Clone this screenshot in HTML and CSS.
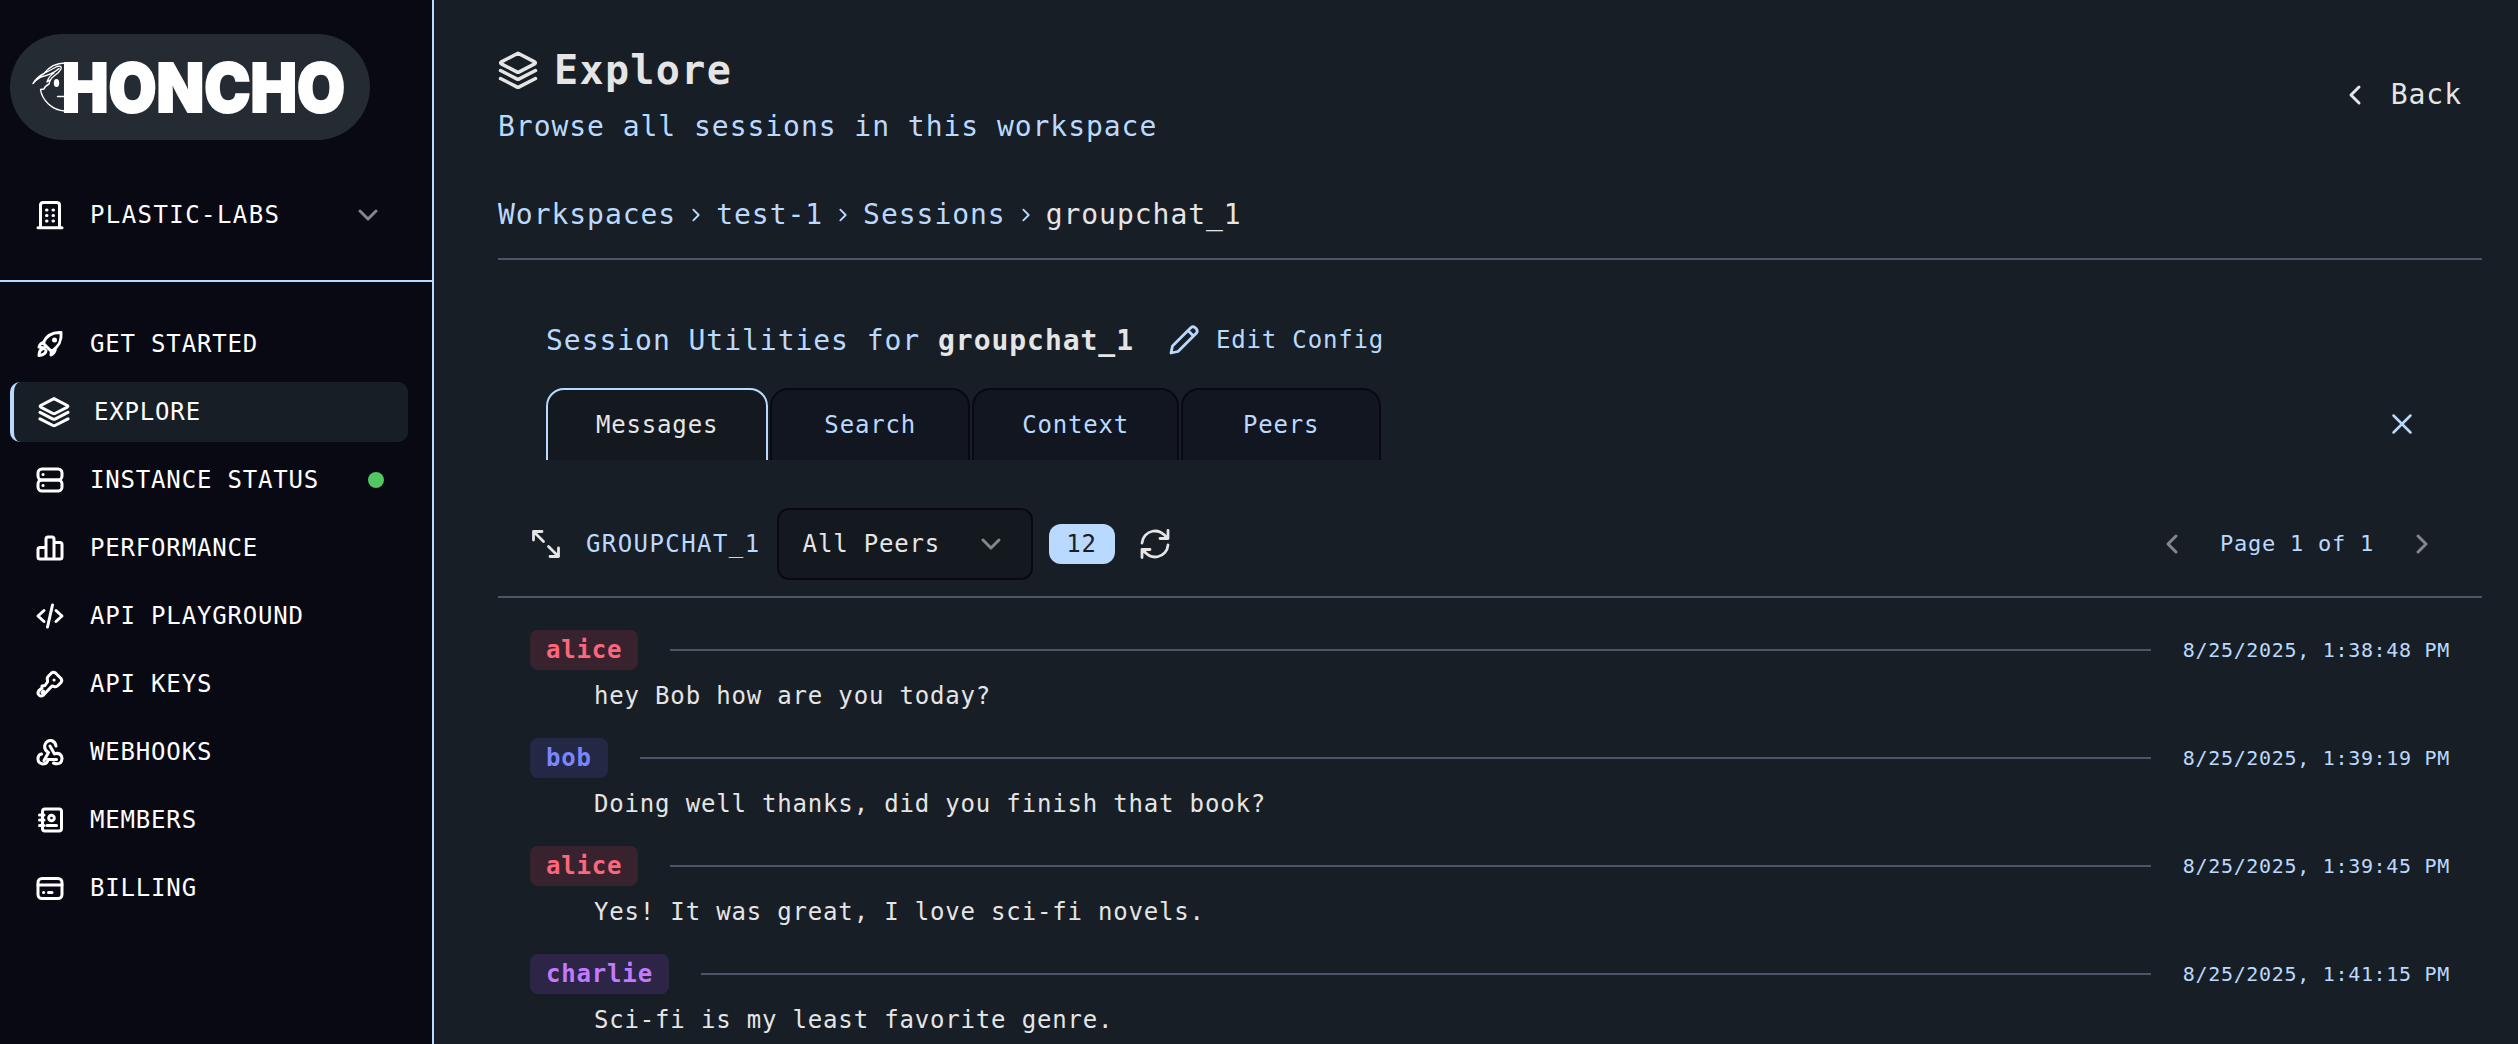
FILE: index.html
```html
<!DOCTYPE html>
<html lang="en">
<head>
<meta charset="utf-8">
<title>Honcho – Explore</title>
<link rel="stylesheet" href="styles.css">
</head>
<body>
<svg class="defs" aria-hidden="true">
  <symbol id="layers" viewBox="0 0 32 32"><path d="M16 2.600 29.300 9.500Q30.500 10.300 29.300 11.100L17 17.500Q16 18 15 17.500L2.700 11.100Q1.500 10.300 2.700 9.500Z M2 16.400 15 23.100Q16 23.600 17 23.100L30 16.400 M2 22.800 15 29.500Q16 30 17 29.500L30 22.800"/></symbol>
  <symbol id="down" viewBox="0 0 24 24"><path d="m4 8 8 8 8-8"/></symbol>
  <symbol id="right" viewBox="0 0 24 24"><path d="m8 4 8 8-8 8"/></symbol>
  <symbol id="left" viewBox="0 0 24 24"><path d="m16 4-8 8 8 8"/></symbol>
</svg>
<div class="app">
  <aside class="sidebar">
    <div class="logo">
      <svg width="316" height="58" viewBox="0 0 316 58">
        <g fill="none" stroke="#fff" stroke-width="1.400" stroke-linecap="round">
          <path d="M33 5C24 5 17 9 12 15.500M1 25.500Q5 19 12 15.500L25 8.500Q30 7 29 11Q27 15 22 18Q18 21 17 26Q13 28 12 31L8.500 31.500C10 42 20 52.500 33 53M1 25.500Q4 22 9 19C15 17.500 22 15 27 10.500M22 15Q17 18 15 24L18 22M25.500 38.500h7"/>
        </g>
        <ellipse cx="24.500" cy="25" rx="2.700" ry="4" fill="#fff" stroke="none"/>
        <text class="wordmark" x="30" y="53.500" textLength="283" lengthAdjust="spacingAndGlyphs">HONCHO</text>
      </svg>
    </div>
    <div class="org">
      <svg class="icon" viewBox="0 0 32 32"><path d="M6.500 28.500V6Q6.500 3.500 9.500 3.500H22.500Q25.500 3.500 25.500 6V28.500M4 28.700H28"/><path class="dots" d="M12.500 11h.5M19 11h.5M12.500 16.500h.5M19 16.500h.5M12.500 22h.5M19 22h.5"/></svg>
      <span>PLASTIC-LABS</span>
      <svg class="caret" viewBox="0 0 24 24"><use href="#down"/></svg>
    </div>
    <nav>
      <a><svg class="icon" viewBox="0 0 32 32"><path d="M9 15C12 8 17 4 27 4.500C28 14 24 19 17.500 23.500L9 15ZM10 14.500Q6 15 5 19L10.500 20M17.500 22.500 17 27Q21 25 21.500 20M10 20.500C6 21 5 24 5 27.500C9 27 12 26 12 22.500"/><circle cx="20.500" cy="12" r="2.500" fill="currentColor" stroke="none"/></svg><span>GET STARTED</span></a>
      <a class="active"><svg class="icon"><use href="#layers"/></svg><span>EXPLORE</span></a>
      <a><svg class="icon" viewBox="0 0 32 32"><rect x="4" y="5" width="24" height="11" rx="4"/><rect x="4" y="16" width="24" height="11" rx="4"/><path class="dots" d="M9 10.500h.1M9 21.500h.1"/></svg><span>INSTANCE STATUS</span><i class="status"></i></a>
      <a><svg class="icon" viewBox="0 0 32 32"><path d="M12 15.500H6Q4 15.500 4 17.500V25Q4 27 6 27H26Q28 27 28 25V12.500Q28 10.500 26 10.500H20M12 27V7Q12 5 14 5H18Q20 5 20 7V27"/></svg><span>PERFORMANCE</span></a>
      <a><svg class="icon" viewBox="0 0 32 32"><path d="M10 10.500 4 16l6 5.500M22 10.500 28 16l-6 5.500M18.500 5 13.500 27"/></svg><span>API PLAYGROUND</span></a>
      <a><svg class="icon" viewBox="0 0 32 32"><path d="M13.500 12Q12.500 10 14.500 8L17.500 5Q19.500 3.500 21.500 5L27 10.500Q28.500 12.500 27 14.500L24 17.500Q22 19.500 20 18.500L18 18 9.500 27Q7 29 5 27Q3 25 5 22.500L8 20V18L11 17.500 13.500 14ZM8 24.500l1.500-1.500"/><path class="dots" d="M20 12h.1"/></svg><span>API KEYS</span></a>
      <a><svg class="icon" viewBox="0 0 32 32"><path d="M10 24.500 14.500 16.500Q9.500 14 11 8.500Q13 4 17.500 4.500Q21.500 6 22 10M16 10 20.500 18Q25 16 27.500 20Q29 24.500 26 27Q23 28.500 19.500 27M22.500 23.500H14Q13.500 28 8.500 28Q3.500 27 4 22Q4.500 18.500 7.500 18"/></svg><span>WEBHOOKS</span></a>
      <a><svg class="icon" viewBox="0 0 32 32"><rect x="8.500" y="5" width="19" height="22" rx="2.500"/><circle cx="17.500" cy="14" r="2.800"/><path d="M13 21.500H22.500M5.500 11H10M5.500 16H10M5.500 21.500H10"/></svg><span>MEMBERS</span></a>
      <a><svg class="icon" viewBox="0 0 32 32"><rect x="4" y="6.500" width="24" height="20" rx="4"/><path d="M4 13H28M9.500 20.500h.2M14.500 20.500h3.500"/></svg><span>BILLING</span></a>
    </nav>
  </aside>
  <main>
    <header class="page-head">
      <div>
        <h1><svg class="h1-icon"><use href="#layers"/></svg>Explore</h1>
        <p class="sub">Browse all sessions in this workspace</p>
      </div>
      <a class="back"><svg class="caret"><use href="#left"/></svg><span>Back</span></a>
    </header>
    <div class="crumbs"><span>Workspaces</span><svg><use href="#right"/></svg><span>test-1</span><svg><use href="#right"/></svg><span>Sessions</span><svg><use href="#right"/></svg><span class="current">groupchat_1</span></div>
    <section class="utilities">
      <div class="util-head">
        <h2>Session Utilities for <b>groupchat_1</b></h2>
        <a class="edit"><svg viewBox="0 0 32 32"><path d="M3 29 4.500 22 23 3.500Q25 2 27 3.500L28.500 5Q30 7 28.500 9L10 27.500 3 29ZM20 6.500 25.500 12"/></svg><span>Edit Config</span></a>
      </div>
      <div class="tab-row">
        <div class="tabs"><a class="tab on">Messages</a><a class="tab">Search</a><a class="tab">Context</a><a class="tab">Peers</a></div>
        <svg class="close" viewBox="0 0 24 24"><path d="M3.500 3.500 20.500 20.500M20.500 3.500 3.500 20.500"/></svg>
      </div>
    </section>
    <div class="toolbar">
      <svg class="tool" viewBox="0 0 32 32"><path d="M3.500 12V3.500H12M3.500 3.500 13.500 13.500M28.500 20V28.500H20M28.500 28.500 18.500 18.500"/></svg>
      <span class="room">GROUPCHAT_1</span>
      <div class="select"><span>All Peers</span><svg class="caret"><use href="#down"/></svg></div>
      <span class="count">12</span>
      <svg class="tool" viewBox="0 0 32 32"><path d="M3 15A13 13 0 0 1 27.500 10M29 2.500V10.500H21M29 17A13 13 0 0 1 4.500 22M3 29.500V21.500H11"/></svg>
      <div class="pager"><svg class="caret"><use href="#left"/></svg><span>Page 1 of 1</span><svg class="caret"><use href="#right"/></svg></div>
    </div>
    <ul class="messages">
      <li><div class="meta"><b class="peer rose">alice</b><hr><time>8/25/2025, 1:38:48 PM</time></div><p>hey Bob how are you today?</p></li>
      <li><div class="meta"><b class="peer indigo">bob</b><hr><time>8/25/2025, 1:39:19 PM</time></div><p>Doing well thanks, did you finish that book?</p></li>
      <li><div class="meta"><b class="peer rose">alice</b><hr><time>8/25/2025, 1:39:45 PM</time></div><p>Yes! It was great, I love sci-fi novels.</p></li>
      <li><div class="meta"><b class="peer purple">charlie</b><hr><time>8/25/2025, 1:41:15 PM</time></div><p>Sci-fi is my least favorite genre.</p></li>
    </ul>
  </main>
</div>
</body>
</html>
```
FILE: styles.css
```css
:root {
  --ink: #090914;
  --panel: #181e26;
  --sky: #bad9ff;
  --text: #e5e5e5;
  --rule: #4a5565;
}
* { box-sizing: border-box; margin: 0; padding: 0; }
html, body { height: 100%; overflow: hidden; }
body {
  background: var(--panel);
  color: var(--text);
  font: 24px/32px "DejaVu Sans Mono", monospace;
  white-space: nowrap;
}
span, p, h1, h2, a, time, b { letter-spacing: .0343em; }
svg { display: block; flex: none; fill: none; stroke: currentColor; stroke-width: 2.800; stroke-linecap: round; stroke-linejoin: round; overflow: visible; }
.defs { display: none; }
.app { display: flex; height: 1044px; }

.sidebar { width: 434px; flex: none; background: var(--ink); border-right: 2px solid var(--sky); color: #fff; }
.logo { width: 360px; height: 106px; margin: 34px 0 0 10px; padding: 24px 22px; border-radius: 53px; background: #252b33; }
.wordmark { font: 900 68px Inter, sans-serif; fill: #fff; stroke: #fff; stroke-width: 2; stroke-linejoin: miter; }
.org { display: flex; align-items: center; height: 142px; padding: 10px 52px 0 34px; border-bottom: 2px solid var(--sky); }
.org span, nav span { margin-left: 24px; }
.org span { letter-spacing: .0593em; }
.icon { width: 32px; height: 32px; stroke-width: 3; }
.dots { stroke-width: 3; }
.caret { width: 24px; height: 24px; color: #85868a; stroke-width: 3; }
.org .caret { margin-left: auto; }
nav { display: flex; flex-direction: column; gap: 8px; padding: 32px 24px 0 10px; }
nav a { display: flex; align-items: center; height: 60px; padding: 0 24px; border-radius: 10px; }
nav .active { background: var(--panel); border-left: 4px solid var(--sky); }
.status { width: 16px; height: 16px; margin-left: auto; border-radius: 50%; background: #50c760; }

main { flex: 1; padding: 0 36px 0 64px; min-width: 0; }
.page-head { display: flex; justify-content: space-between; padding-top: 46px; height: 190px; }
h1 { display: flex; align-items: center; gap: 16px; font-size: 40px; line-height: 48px; }
.h1-icon { width: 40px; height: 40px; }
.sub { margin-top: 15px; font-size: 28px; line-height: 36px; color: var(--sky); }
.back { display: flex; align-items: center; gap: 24px; height: 98px; margin-right: 20px; font-size: 28px; }
.back .caret { color: var(--text); }
.crumbs { display: flex; align-items: center; gap: 12px; height: 70px; padding-bottom: 18px; border-bottom: 2px solid var(--rule); font-size: 28px; color: var(--sky); }
.crumbs svg { width: 16px; height: 16px; }
.current { color: var(--text); }

.utilities { padding: 60px 48px 0; height: 200px; }
.util-head { display: flex; align-items: center; gap: 34px; height: 40px; color: var(--sky); }
h2 { font-size: 28px; font-weight: 400; line-height: 38px; padding-top: 1px; }
h2 b { color: var(--text); }
.edit { display: flex; align-items: center; gap: 16px; }
.edit svg { width: 32px; height: 32px; }
.tab-row { display: flex; align-items: center; justify-content: space-between; margin-top: 28px; padding-right: 20px; }
.tabs { display: flex; gap: 2px; }
.tab { min-width: 200px; height: 72px; padding: 0 48px; line-height: 70px; text-align: center; color: var(--sky); background: #121620; border: 2px solid #090914; border-bottom: 0; border-radius: 18px 18px 0 0; }
.tab.on { color: var(--text); background: #14181f; border-color: var(--sky); }
.close { width: 24px; height: 24px; color: var(--sky); stroke-width: 2.500; }

.toolbar { display: flex; align-items: center; height: 138px; padding: 32px 48px 0 32px; border-bottom: 2px solid var(--rule); }
.tool { width: 32px; height: 32px; }
.room { margin: 0 16px 0 24px; letter-spacing: .0593em; color: var(--sky); }
.select { display: flex; align-items: center; justify-content: space-between; width: 256px; height: 72px; padding: 0 28px 0 24px; border: 2px solid var(--ink); border-radius: 12px; background: #14181f; }
.count { width: 66px; height: 40px; margin: 0 24px 0 16px; border-radius: 12px; background: var(--sky); color: var(--panel); line-height: 40px; text-align: center; }
.pager { display: flex; align-items: center; gap: 36px; margin-left: auto; font-size: 22px; color: var(--sky); }

.messages { list-style: none; padding: 32px 32px 0; }
li { height: 108px; }
.meta { display: flex; align-items: center; gap: 32px; height: 40px; }
.peer { padding: 0 16px; border-radius: 8px; line-height: 40px; }
.rose { color: #ff667c; background: #38222e; }
.indigo { color: #7c86ff; background: #232845; }
.purple { color: #c27aff; background: #2c2546; }
hr { flex: 1; height: 2px; border: 0; background: var(--rule); }
time { font-size: 20px; color: var(--sky); }
li p { margin: 10px 0 0 64px; }
```
